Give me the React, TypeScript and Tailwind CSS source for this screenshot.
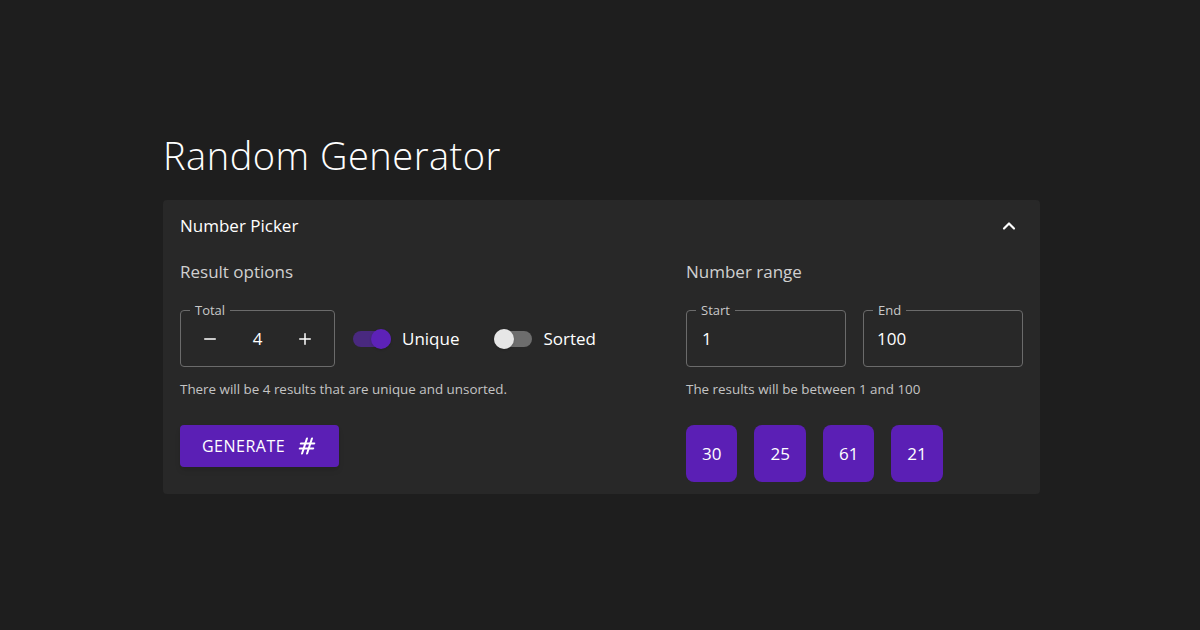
import { ChevronUp, Minus, Plus, Hash } from "lucide-react";

function Outlined({ label, className, children }: { label: string; className?: string; children: React.ReactNode }) {
  return (
    <div className={`relative h-[57px] rounded border border-[#6b6b6b] ${className ?? ""}`}>
      <span className="absolute -top-[9px] left-[9px] bg-[#282828] px-[5px] text-[13px] leading-[16px] text-[#c9c9c9]">
        {label}
      </span>
      {children}
    </div>
  );
}

function Toggle({ on, label }: { on: boolean; label: string }) {
  return (
    <div className="flex items-center gap-[11px]">
      <div className="relative h-[16px] w-[38px]">
        <div className={`h-[16px] w-[38px] rounded-full ${on ? "bg-[#49297f]" : "bg-[#6d6d6d]"}`} />
        <div
          className={`absolute top-[-2px] h-[20px] w-[20px] rounded-full shadow ${
            on ? "left-[18px] bg-[#5d22b8]" : "left-0 bg-[#e6e6e6]"
          }`}
        />
      </div>
      <span className="text-[17px] text-white">{label}</span>
    </div>
  );
}

export default function App() {
  const results = [30, 25, 61, 21];

  return (
    <div className="h-[630px] w-[1200px] bg-[#1e1e1e] pt-[131px] pl-[163px] font-['Open_Sans',sans-serif]">
      <div className="w-[877px]">
        <h1 className="mb-[21px] text-[38px] font-light leading-[48px] tracking-[0.5px] text-white">Random Generator</h1>

        <div className="rounded-[4px] bg-[#282828] px-[17px] pb-[12px]">
          <div className="flex h-[52px] items-center justify-between">
            <span className="text-[17px] text-white">Number Picker</span>
            <ChevronUp size={20} strokeWidth={2.6} className="mr-[4px] text-white" />
          </div>

          <div className="mt-[8px] flex gap-[16px]">
            <div className="w-[490px]">
              <div className="text-[17px] leading-[24px] text-[#d0d0d0]">Result options</div>
              <div className="mt-[26px] flex items-center">
                <Outlined label="Total" className="flex w-[155px] items-center justify-between px-[20px]">
                  <Minus size={18} className="text-white" />
                  <span className="text-[17px] text-white">4</span>
                  <Plus size={18} className="text-white" />
                </Outlined>
                <div className="ml-[18px]">
                  <Toggle on label="Unique" />
                </div>
                <div className="ml-[35px]">
                  <Toggle on={false} label="Sorted" />
                </div>
              </div>
              <div className="mt-[13px] text-[13.4px] leading-[18px] text-[#c4c4c4]">
                There will be 4 results that are unique and unsorted.
              </div>
              <button className="mt-[27px] flex h-[42px] w-[159px] items-center justify-center gap-[12px] rounded-[4px] bg-[#5b1fb5] text-[16px] font-medium uppercase tracking-[0.5px] text-white shadow-md">
                Generate
                <Hash size={20} strokeWidth={2.6} className="-skew-x-12" />
              </button>
            </div>

            <div className="w-[337px]">
              <div className="text-[17px] leading-[24px] text-[#d0d0d0]">Number range</div>
              <div className="mt-[26px] flex gap-[17px]">
                <Outlined label="Start" className="flex w-[160px] items-center px-[15px]">
                  <span className="text-[17px] text-white">1</span>
                </Outlined>
                <Outlined label="End" className="flex w-[160px] items-center px-[13px]">
                  <span className="text-[17px] text-white">100</span>
                </Outlined>
              </div>
              <div className="mt-[13px] text-[13.4px] leading-[18px] text-[#c4c4c4]">The results will be between 1 and 100</div>
              <div className="mt-[27px] flex gap-[17px]">
                {results.map((n) => (
                  <div
                    key={n}
                    className="flex h-[57px] items-center justify-center rounded-[8px] bg-[#5b1fb5] px-[16px] text-[17px] text-white"
                  >
                    {n}
                  </div>
                ))}
              </div>
            </div>
          </div>
        </div>
      </div>
    </div>
  );
}
